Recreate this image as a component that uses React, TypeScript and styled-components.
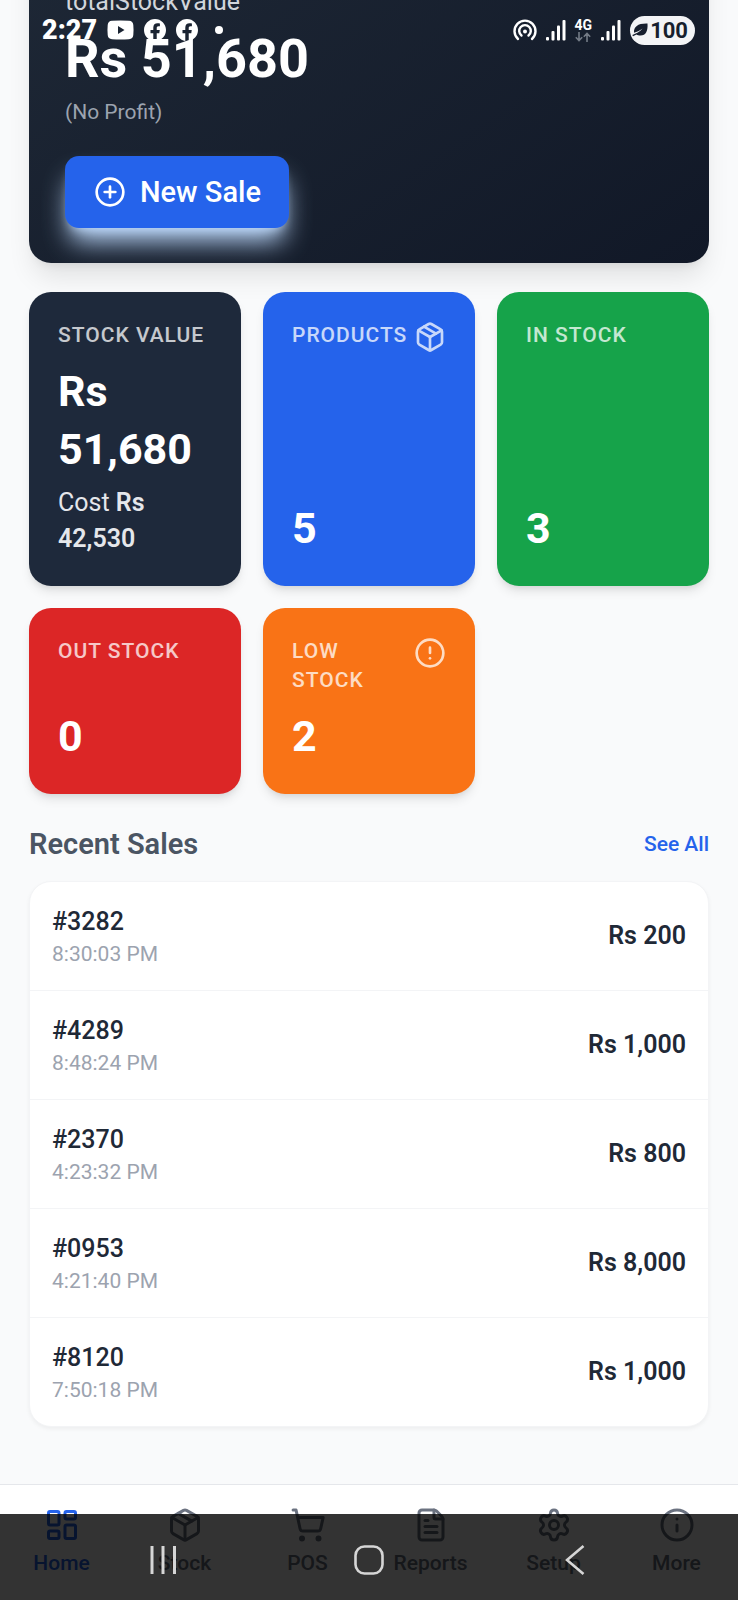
import React from "react";
import styled, { createGlobalStyle } from "styled-components";
import {
  CircleAlert,
  CirclePlus,
  FileText,
  Info,
  LayoutDashboard,
  Package,
  Settings,
  ShoppingCart,
} from "lucide-react";

const GlobalStyle = createGlobalStyle`
  *, *::before, *::after { box-sizing: border-box; }
  body {
    margin: 0;
    background: #f9fafb;
    color: #1f2937;
    font-family: Roboto, "Liberation Sans", sans-serif;
  }
  h2, p, ul, dl, dd, dt { margin: 0; padding: 0; }
  ul { list-style: none; }
`;

const Page = styled.div`
  position: relative;
  min-height: 100vh;
  overflow: hidden;
  display: flex;
  flex-direction: column;
`;

/* The page is scrolled: the top of the hero lies above the window. */
const Main = styled.main`
  flex: 1;
  display: flex;
  flex-direction: column;
  padding: 0 29px 57px;
  margin-top: -120px;
`;

const Hero = styled.section`
  display: flex;
  flex-direction: column;
  align-items: flex-start;
  padding: 104px 36px 35px;
  border-radius: 22px;
  color: #ffffff;
  background: linear-gradient(145deg, #1f2937, #111827);
  box-shadow: 0 18px 27px -5px rgba(0, 0, 0, 0.1), 0 7px 11px -7px rgba(0, 0, 0, 0.1);
`;

const HeroLabel = styled.p`
  font-size: 25px;
  line-height: 36px;
  color: #d1d5db;
`;

const HeroAmount = styled.p`
  font-size: 54px;
  line-height: 64px;
  margin-top: 7px;
  font-weight: 700;
`;

const HeroNote = styled.p`
  font-size: 21px;
  line-height: 29px;
  margin-top: 7px;
  color: #9ca3af;
`;

const NewSaleButton = styled.button`
  display: flex;
  align-items: center;
  gap: 14px;
  height: 72px;
  margin-top: 29px;
  padding: 0 28px 0 29px;
  border: 0;
  border-radius: 14px;
  background: #2563eb;
  color: #ffffff;
  font-family: inherit;
  font-size: 29px;
  font-weight: 500;
  cursor: pointer;
  box-shadow: 0 18px 27px -5px #bfdbfe, 0 7px 11px -7px #bfdbfe;
`;

const Stats = styled.dl`
  display: grid;
  grid-template-columns: repeat(3, minmax(0, 1fr));
  gap: 22px;
  margin-top: 29px;
`;

const StatCard = styled.div<{ $color: string }>`
  display: flex;
  flex-direction: column;
  padding: 29px;
  border-radius: 22px;
  background: ${(p) => p.$color};
  color: #ffffff;
  box-shadow: 0 7px 11px -2px rgba(0, 0, 0, 0.1), 0 4px 7px -4px rgba(0, 0, 0, 0.1);
`;

const StatHead = styled.dt`
  display: flex;
  align-items: flex-start;
  justify-content: space-between;
  margin-bottom: 12px;
  font-size: 21px;
  line-height: 29px;
  font-weight: 500;
  letter-spacing: 1px;
  text-transform: uppercase;
  opacity: 0.75;

  svg { flex: none; }
`;

const StatValue = styled.dd`
  && { margin-top: auto; }
  font-size: 43px;
  line-height: 58px;
  font-weight: 700;
`;

const StatCost = styled.dd`
  && { margin-top: 7px; }
  font-size: 25px;
  line-height: 36px;
  color: #e5e7eb;

  strong { font-weight: 600; }
`;

const SectionHead = styled.div`
  display: flex;
  align-items: center;
  justify-content: space-between;
  margin: 28px 0 15px;
`;

const SectionTitle = styled.h2`
  font-size: 29px;
  line-height: 44px;
  font-weight: 600;
  color: #4b5563;
`;

const SeeAll = styled.a`
  font-size: 21px;
  line-height: 29px;
  font-weight: 500;
  color: #2563eb;
  text-decoration: none;
`;

const SalesList = styled.ul`
  overflow: hidden;
  border: 1px solid #f3f4f6;
  border-radius: 22px;
  background: #ffffff;
  box-shadow: 0 2px 4px rgba(0, 0, 0, 0.05);
`;

const SaleRow = styled.li`
  display: flex;
  align-items: center;
  justify-content: space-between;
  padding: 22px;

  & + & { border-top: 1px solid #f3f4f6; }
`;

const SaleId = styled.p`
  font-size: 25px;
  line-height: 36px;
  font-weight: 500;
`;

const SaleTime = styled.p`
  font-size: 21px;
  line-height: 28px;
  color: #9ca3af;
`;

const SaleTotal = styled.p`
  font-size: 25px;
  line-height: 36px;
  font-weight: 600;
`;

const TabBar = styled.nav`
  display: grid;
  grid-template-columns: repeat(6, minmax(0, 1fr));
  padding: 22px 0;
  border-top: 1px solid #e5e7eb;
  background: #ffffff;
`;

const Tab = styled.a<{ $active?: boolean }>`
  display: flex;
  flex-direction: column;
  align-items: center;
  gap: 6px;
  font-size: 21px;
  line-height: 29px;
  font-weight: 500;
  text-decoration: none;
  color: ${(p) => (p.$active ? "#2563eb" : "#6b7280")};
`;

const StatusBar = styled.div`
  position: absolute;
  top: 0;
  left: 0;
  right: 0;
  height: 60px;
  padding: 0 43px 0 42px;
  display: flex;
  align-items: center;
  justify-content: space-between;
  color: #ffffff;
`;

const StatusGroup = styled.div<{ $gap: number }>`
  display: flex;
  align-items: center;
  gap: ${(p) => p.$gap}px;

  svg { display: block; }
`;

const Clock = styled.span`
  font-size: 27px;
  font-weight: 900;
`;

const Network = styled.span`
  display: flex;
  flex-direction: column;
  align-items: center;
  font-size: 14px;
  line-height: 13px;
  font-weight: 700;
`;

const Battery = styled.span`
  display: flex;
  align-items: center;
  gap: 2px;
  height: 29px;
  padding: 0 7px 0 2px;
  border-radius: 15px;
  background: #f3f4f6;
  color: #171f2e;
  font-size: 22px;
  font-weight: 700;
`;

const SystemNav = styled.div`
  position: absolute;
  left: 0;
  right: 0;
  bottom: 0;
  height: 86px;
  padding: 5px 60px 0;
  display: grid;
  grid-template-columns: repeat(3, 1fr);
  place-items: center;
  background: rgba(0, 0, 0, 0.8);
`;

const SystemKey = styled.button`
  display: flex;
  padding: 0;
  border: 0;
  background: none;
  color: #d6d6d6;
  cursor: pointer;
`;

const sales = [
  { id: "#3282", time: "8:30:03 PM", total: "Rs 200" },
  { id: "#4289", time: "8:48:24 PM", total: "Rs 1,000" },
  { id: "#2370", time: "4:23:32 PM", total: "Rs 800" },
  { id: "#0953", time: "4:21:40 PM", total: "Rs 8,000" },
  { id: "#8120", time: "7:50:18 PM", total: "Rs 1,000" },
];

const tabs = [
  { label: "Home", Icon: LayoutDashboard },
  { label: "Stock", Icon: Package },
  { label: "POS", Icon: ShoppingCart },
  { label: "Reports", Icon: FileText },
  { label: "Setup", Icon: Settings },
  { label: "More", Icon: Info },
];

const YouTubeGlyph = () => (
  <svg width="27" height="20" viewBox="0 0 27 20" aria-hidden="true">
    <path
      fill="#fff"
      fillRule="evenodd"
      d="M5 .8Q13.500 0 22 .8Q26 1 26.300 5Q26.800 10 26.300 15Q26 19 22 19.200Q13.500 20 5 19.200Q1 19 .7 15Q.2 10 .7 5Q1 1 5 .8ZM11 6v8l6.500-4Z"
    />
  </svg>
);

const FacebookGlyph = () => (
  <svg width="22" height="22" viewBox="0 0 24 24" aria-hidden="true">
    <path
      fill="#fff"
      d="M24 12.070C24 5.410 18.630 0 12 0S0 5.410 0 12.070C0 18.100 4.390 23.090 10.130 24v-8.440H7.080v-3.490h3.050V9.410c0-3.020 1.790-4.690 4.530-4.690 1.310 0 2.680.24 2.680.24v2.970h-1.510c-1.490 0-1.950.93-1.950 1.890v2.250h3.320l-.53 3.490h-2.790V24C19.610 23.090 24 18.100 24 12.070Z"
    />
  </svg>
);

const HotspotGlyph = () => (
  <svg width="24" height="22" viewBox="0 0 24 22" fill="none" stroke="#fff" strokeWidth="2.400" strokeLinecap="round" aria-hidden="true">
    <path d="M5 20A10.500 10.500 0 1 1 19 20" />
    <path d="M8.500 16.500A5.800 5.800 0 1 1 15.500 16.500" />
    <circle cx="12" cy="12.500" r="2" fill="#fff" stroke="none" />
  </svg>
);

const SignalGlyph = () => (
  <svg width="20" height="21" viewBox="0 0 20 21" fill="#fff" aria-hidden="true">
    <rect x="0" y="17" width="3" height="3.500" rx="1" />
    <rect x="5.500" y="11" width="3" height="9.500" rx="1" />
    <rect x="11" y="5.500" width="3" height="15" rx="1" />
    <rect x="16.500" y="0" width="3" height="20.500" rx="1" />
  </svg>
);

const DataArrows = () => (
  <svg width="16" height="10" viewBox="0 0 16 10" fill="none" stroke="#747b86" strokeWidth="1.600" aria-hidden="true">
    <path d="M4 0v8.500M.8 5.300 4 8.500l3.200-3.200M12 10V1.500M8.800 4.700 12 1.500l3.200 3.200" />
  </svg>
);

const LeafGlyph = () => (
  <svg width="16" height="14" viewBox="0 0 16 14" aria-hidden="true">
    <path fill="#171f2e" d="M15.500.5C16 8 14 12.500 8.500 12.500c-1.800 0-3-.4-4-1.100L1 13.300l-.7-1.400C4 10.500 8 9 10.500 5.500 7.500 8 5 9 2 9.700 1.700 3.500 6 .2 15.500.5Z" />
  </svg>
);

export default function App() {
  return (
    <Page>
      <GlobalStyle />
      <Main>
        <Hero>
          <HeroLabel>totalStockValue</HeroLabel>
          <HeroAmount>Rs 51,680</HeroAmount>
          <HeroNote>(No Profit)</HeroNote>
          <NewSaleButton type="button">
            <CirclePlus size={32} aria-hidden="true" />
            New Sale
          </NewSaleButton>
        </Hero>

        <Stats>
          <StatCard $color="#1e293b">
            <StatHead>Stock Value</StatHead>
            <StatValue>Rs 51,680</StatValue>
            <StatCost>
              Cost <strong>Rs 42,530</strong>
            </StatCost>
          </StatCard>
          <StatCard $color="#2563eb">
            <StatHead>
              Products
              <Package size={32} aria-hidden="true" />
            </StatHead>
            <StatValue>5</StatValue>
          </StatCard>
          <StatCard $color="#16a34a">
            <StatHead>In Stock</StatHead>
            <StatValue>3</StatValue>
          </StatCard>
          <StatCard $color="#dc2626">
            <StatHead>Out Stock</StatHead>
            <StatValue>0</StatValue>
          </StatCard>
          <StatCard $color="#f97316">
            <StatHead>
              Low Stock
              <CircleAlert size={32} aria-hidden="true" />
            </StatHead>
            <StatValue>2</StatValue>
          </StatCard>
        </Stats>

        <SectionHead>
          <SectionTitle>Recent Sales</SectionTitle>
          <SeeAll href="#sales">See All</SeeAll>
        </SectionHead>
        <SalesList>
          {sales.map((sale) => (
            <SaleRow key={sale.id}>
              <div>
                <SaleId>{sale.id}</SaleId>
                <SaleTime>{sale.time}</SaleTime>
              </div>
              <SaleTotal>{sale.total}</SaleTotal>
            </SaleRow>
          ))}
        </SalesList>
      </Main>

      <TabBar>
        {tabs.map(({ label, Icon }, i) => (
          <Tab key={label} href={`#${label.toLowerCase()}`} $active={i === 0}>
            <Icon size={36} aria-hidden="true" />
            {label}
          </Tab>
        ))}
      </TabBar>

      <StatusBar>
        <StatusGroup $gap={10}>
          <Clock>2:27</Clock>
          <YouTubeGlyph />
          <FacebookGlyph />
          <FacebookGlyph />
          <svg width="30" height="8" viewBox="0 0 30 8" aria-hidden="true">
            <circle cx="11" cy="4" r="4" fill="#fff" />
          </svg>
        </StatusGroup>
        <StatusGroup $gap={9}>
          <HotspotGlyph />
          <SignalGlyph />
          <Network>
            4G
            <DataArrows />
          </Network>
          <SignalGlyph />
          <Battery>
            <LeafGlyph />
            100
          </Battery>
        </StatusGroup>
      </StatusBar>

      <SystemNav>
        <SystemKey type="button" aria-label="Recent apps">
          <svg width="28" height="30" viewBox="0 0 28 30" stroke="currentColor" strokeWidth="3" fill="none">
            <path d="M3 1v28M14 1v28M25.500 1v28" />
          </svg>
        </SystemKey>
        <SystemKey type="button" aria-label="Home screen">
          <svg width="30" height="30" viewBox="0 0 30 30" stroke="currentColor" strokeWidth="2.600" fill="none">
            <rect x="1.500" y="1.500" width="27" height="27" rx="9" />
          </svg>
        </SystemKey>
        <SystemKey type="button" aria-label="Back">
          <svg width="20" height="30" viewBox="0 0 20 30" stroke="currentColor" strokeWidth="2.600" fill="none">
            <path d="M18.500 1 2 15l16.500 14" />
          </svg>
        </SystemKey>
      </SystemNav>
    </Page>
  );
}
